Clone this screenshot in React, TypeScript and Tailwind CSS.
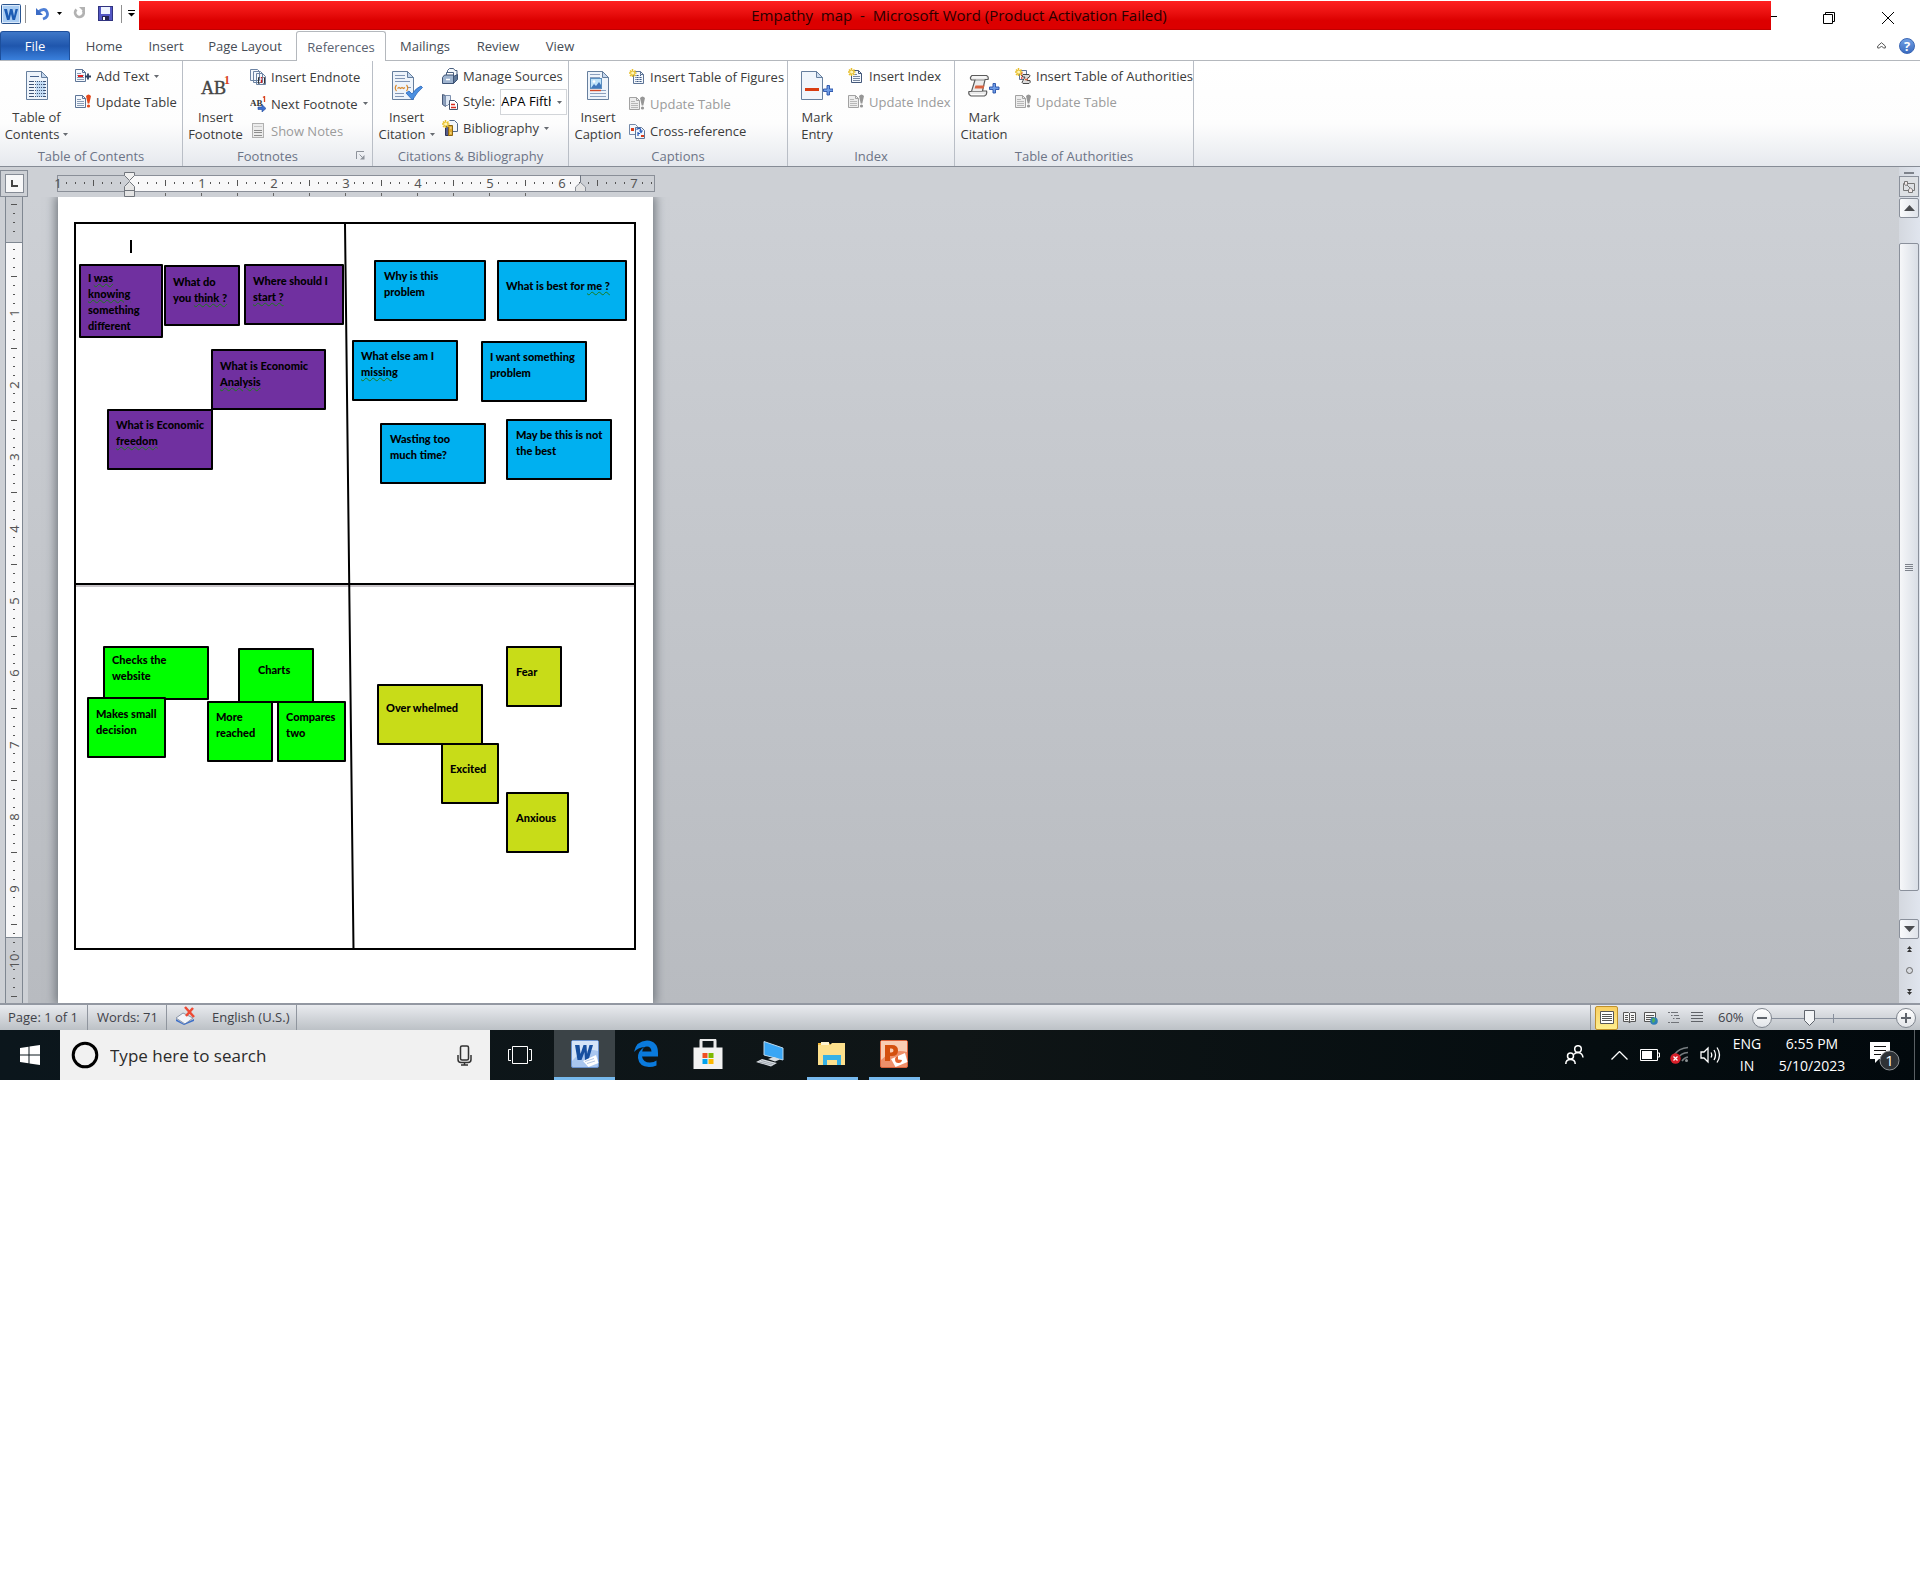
import React from "react";

type Kids = { children?: React.ReactNode };

/* ---------- shared drawing helpers ---------- */

const Caret = () => (
  <svg width="5" height="3" viewBox="0 0 5 3" className="shrink-0" aria-hidden="true">
    <path d="M0 0h5L2.500 3z" fill="#666a70" />
  </svg>
);

const Icon = ({ children, s = 16 }: Kids & { s?: number }) => (
  <svg width={s} height={s} viewBox={`0 0 ${s} ${s}`} className="shrink-0" aria-hidden="true">
    {children}
  </svg>
);

const SmallPage = ({ x = 0, y = 1, stroke = "#5d7496", fill = "#f4f8fd" }) => (
  <g transform={`translate(${x} ${y})`}>
    <path d="M.5 .5h7l3 3v9h-10z" fill={fill} stroke={stroke} />
    <path d="M7.500.5v3h3" fill="none" stroke={stroke} />
    <path d="M2 4.500h4M2 6.500h7M2 8.500h7M2 10.500h7" stroke={stroke} opacity=".7" />
  </g>
);

const Spark = () => (
  <g>
    <path d="M3.500 0v8M0 4h7.500M1 1.500l5.500 5.500M6.500 1.500L1 7" stroke="#e8c02c" strokeWidth="1.500" />
    <circle cx="3.700" cy="4" r="1.600" fill="#fff6b8" />
  </g>
);

const BigPage = ({ x = 0 }) => (
  <g transform={`translate(${x} 0)`}>
    <path d="M1.500 2.500h15l6 6v22h-21z" fill="#eef4fb" stroke="#667f9e" />
    <path d="M16.500 2.500v6h6z" fill="#c4d7ee" stroke="#667f9e" />
  </g>
);

/* ---------- ribbon icons ---------- */

const TocIcon = () => (
  <Icon s={32}>
    <g transform="translate(4 0)">
      <BigPage />
      <rect x="11" y="12" width="9" height="16" fill="#c3dcf5" />
      <path d="M5 7.500h9" stroke="#47628c" />
      <path d="M4 12.500h5M4 15.500h5M4 18.500h5M4 21.500h5M4 24.500h5M4 27.500h5" stroke="#3f5577" />
      <path d="M10 12.500h7M10 15.500h7M10 18.500h7M10 21.500h7M10 24.500h7M10 27.500h7" stroke="#3f5577" strokeDasharray="1 1" />
      <path d="M18 12.500h3M18 15.500h3M18 18.500h3M18 21.500h3M18 24.500h3M18 27.500h3" stroke="#3f5577" />
    </g>
  </Icon>
);

const FootnoteIcon = () => (
  <Icon s={32}>
    <text x="1" y="25" fontFamily="'Liberation Serif', serif" fontSize="18" fill="#444" stroke="#444" strokeWidth=".4">AB</text>
    <text x="24" y="15" fontFamily="'Liberation Serif', serif" fontSize="12" fontWeight="700" fill="#d9431e">1</text>
  </Icon>
);

const CitationIcon = () => (
  <Icon s={32}>
    <BigPage />
    <path d="M4 6.500h10M4 9.500h10M4 12.500h15M4 24.500h9M4 27.500h9M16 18.500h4" stroke="#8296b5" />
    <path d="M5.500 16q-2.500 3 0 6M15.500 16q2.500 3 0 6M6.500 19.500l1.500-1 1.500 1 1.500-1 1.500 1 1.500-1" fill="none" stroke="#d98a2e" strokeWidth="1.200" />
    <path d="M15 24l3-2 3 3q4-6 9-8l1.500 1.500Q26 23 21.500 31z" fill="#4a8fe0" stroke="#2a66ba" strokeWidth=".8" />
  </Icon>
);

const CaptionIcon = () => (
  <Icon s={32}>
    <g transform="translate(4 0)">
      <BigPage />
      <path d="M4 5.500h10M4 8.500h10M4 24.500h16M4 27.500h16M15 21.500h5" stroke="#8ba0bf" />
      <rect x="4.500" y="9.500" width="11" height="10" fill="#bfe3fa" stroke="#5c8fc0" />
      <path d="M5 19l3-4 2 2 3-4 2 3v3z" fill="#3f78bd" />
      <circle cx="8" cy="12.500" r="1.300" fill="#fff" />
      <path d="M4 21.500h11" stroke="#d2492a" strokeWidth="1.400" />
    </g>
  </Icon>
);

const PlusMark = ({ x = 0 }) => (
  <path transform={`translate(${x} 0)`} d="M3 16.500h2.500v3.500H9v2.500H5.500V26H3v-3.500H-.5V20H3z" fill="#6f9de6" stroke="#2750a8" strokeWidth=".9" />
);

const MarkEntryIcon = () => (
  <Icon s={32}>
    <path d="M.5 2.500h15l6 6v22h-21z" fill="#f1f6fc" stroke="#667f9e" />
    <path d="M15.500 2.500v6h6z" fill="#d0dff1" stroke="#667f9e" />
    <rect x="4" y="19" width="14" height="3" fill="#d93d12" />
    <PlusMark x={23} />
  </Icon>
);

const MarkCitationIcon = () => (
  <Icon s={32}>
    <path d="M4 6.500h14.500q2.500 1 1.500 4h-3L14.500 22h4q1 4-2 5H3q-3-1-2-4.500h2.500L7 11H3.500Q1 9 4 6.500z" fill="#ececec" stroke="#5b5b5b" strokeWidth="1.200" />
    <path d="M7 11h9.500M3.500 22.500h11" stroke="#8a8a8a" />
    <path d="M4 8h14M3 25.500h13" stroke="#fff" />
    <path d="M7.500 16.500h9l-1 3H6.500z" fill="#d96442" />
    <g transform="translate(0 -2)"><PlusMark x={22} /></g>
  </Icon>
);

const AddTextIcon = () => (
  <Icon>
    <SmallPage />
    <path d="M3 8h5" stroke="#e02020" strokeWidth="2" />
    <path d="M10 8.500h6M13 5.500v6" stroke="#2c3f5e" strokeWidth="1.800" />
  </Icon>
);

const UpdateIcon = ({ off = false }) => (
  <Icon>
    {off ? <SmallPage stroke="#a2a2a2" fill="#ededed" /> : <SmallPage />}
    <path d="M11 2q2.500-3 5 0l-1.700 7.500h-1.600z" fill={off ? "#969696" : "#e2481c"} />
    <circle cx="13.500" cy="12" r="1.600" fill={off ? "#969696" : "#e2481c"} />
  </Icon>
);

const EndnoteIcon = () => (
  <Icon>
    <path d="M.5.5h7l2 2v9h-9zM3.500 2.500h7l2 2v9h-9zM6.500 4.500h6l3 3v8h-9z" fill="#f3f7fc" stroke="#6d84a4" />
    <path d="M9.500 8.500h-1v6h1M13.500 8.500h1v6h-1" fill="none" stroke="#333" />
    <path d="M11.500 8v1.500M11.500 10.500V14" stroke="#d12020" strokeWidth="1.400" />
  </Icon>
);

const NextFootnoteIcon = () => (
  <Icon>
    <text x="0" y="10" fontFamily="'Liberation Serif', serif" fontSize="9" fontWeight="700" fill="#333">AB</text>
    <path d="M13 1.500l1.500-1V6" fill="none" stroke="#d9431e" strokeWidth="1.300" />
    <path d="M8 11h4V8.500l4 4-4 3.500v-2.500H8z" fill="#3c6fd0" stroke="#234a98" strokeWidth=".6" />
  </Icon>
);

const ShowNotesIcon = () => (
  <Icon>
    <rect x="2.500" y=".5" width="11" height="14" fill="#ececec" stroke="#b0b0b0" />
    <path d="M4 3.500h8" stroke="#c8c8c8" />
    <path d="M4 7.500h8M4 9.500h8M4 12.500h8" stroke="#8d8d8d" />
  </Icon>
);

const SourcesIcon = () => (
  <Icon>
    <path d="M5.500 8V2.500l2-2h4l1.500 2h2V11" fill="#f4f8fc" stroke="#4a6080" />
    <path d="M4.500 8.500V4.500h7v4" fill="#fff" stroke="#4a6080" />
    <path d="M.5 9.500L2.500 7h9v8.500h-11z" fill="#9fb4cf" stroke="#3d5375" />
    <path d="M11.500 15.500l4-4V6.500l-4 2z" fill="#5e7898" stroke="#3d5375" />
    <path d="M4 11.500h4" stroke="#fff" strokeWidth="1.500" />
  </Icon>
);

const StyleIcon = () => (
  <Icon>
    <path d="M.5.5l3 1v11l-3-2z" fill="#8ca0bd" stroke="#4a5a78" />
    <path d="M3.500 1.500h5v7l-3 3h-2z" fill="#dfe8f4" stroke="#7d90ae" />
    <path d="M7.500 6.500h5l3 3v6h-8z" fill="#fff" stroke="#44536c" />
    <path d="M9 10.500h4M9 13.500h5" stroke="#d92b1c" strokeWidth="1.400" />
  </Icon>
);

const BiblioIcon = () => (
  <Icon>
    <path d="M7.500.5h5l3 3v8h-5" fill="#f2f6fb" stroke="#53698a" />
    <path d="M3.500 6.500h3v9h-3z" fill="#555c8a" stroke="#2d335a" />
    <path d="M6.500 5.500h4v10h-4z" fill="#e0aa32" stroke="#8a6514" />
    <path d="M8 8h1.500M8 13h1.500" stroke="#fff2b8" />
    <Spark />
  </Icon>
);

const InsertFiguresIcon = () => (
  <Icon>
    <SmallPage x={4} y={2} />
    <path d="M8.500 6v8M11.500 6v8" stroke="#3f5a86" strokeDasharray="1 1" />
    <Spark />
  </Icon>
);

const CrossRefIcon = () => (
  <Icon>
    <path d="M.5 1.500h6l2 2v8h-8z" fill="#f4f8fc" stroke="#7288a8" />
    <rect x="2" y="5" width="3" height="3" fill="#da3c18" />
    <path d="M6.500 4.500h6l3 3v8h-9z" fill="#f0f6fd" stroke="#5d7496" />
    <path d="M7.500 6.500q4-3 4.500 1.500M10.500 7.500l1.500 2 1.500-2M9 9v4M9 10.500h2" fill="none" stroke="#2457b8" strokeWidth="1.200" />
    <rect x="12" y="12" width="3" height="2" fill="#da3c18" />
  </Icon>
);

const InsertIndexIcon = () => (
  <Icon>
    <SmallPage x={3} y={2} stroke="#44587a" />
    <Spark />
  </Icon>
);

const AuthoritiesIcon = () => (
  <Icon>
    <path d="M4.500 2.500h7v9h-7z" fill="#f5f8fc" stroke="#5d7496" />
    <path d="M6 5h1.500M6 7.500h1.500M6 10h1.500" stroke="#d92b1c" strokeWidth="1.500" />
    <path d="M8 6.500h6q2 1 0 3h-1l-1 3h3q1 2-1 3H8q-2-1 0-3l2-3.500H8q-2-1 0-2.500z" fill="#ddd" stroke="#474747" />
    <path d="M10 11.500h3" stroke="#d96442" strokeWidth="1.500" />
    <Spark />
  </Icon>
);

/* ---------- ribbon parts ---------- */

const Group = ({ label, className, launcher, children }: Kids & { label: string; className: string; launcher?: boolean }) => (
  <section aria-label={label} className={`flex flex-col border-r border-[#b9bec6] ${className}`}>
    <div className="flex h-[85px] items-start">{children}</div>
    <div className="flex h-[19px] items-center">
      <h2 className={`flex-1 text-center text-[13px] leading-4 text-[#6c7486] ${launcher ? "pr-1" : ""}`}>{label}</h2>
      {launcher && (
        <button aria-label={`${label} options`} className="mr-1 w-3">
          <svg width="9" height="9" viewBox="0 0 9 9" aria-hidden="true">
            <path d="M.5 8V.5H8" fill="none" stroke="#8d929a" />
            <path d="M3.500 3.500l3 3" stroke="#8d929a" />
            <path d="M8.500 4v4.500H4z" fill="#8d929a" />
          </svg>
        </button>
      )}
    </div>
  </section>
);

const Big = ({ icon, a, b, drop, className }: { icon: React.ReactNode; a: string; b: string; drop?: boolean; className: string }) => (
  <button className={`flex shrink-0 flex-col items-center pt-2 pr-0.5 text-[13px] leading-[17px] ${className}`}>
    {icon}
    <span className="mt-2">{a}</span>
    <span className="flex items-center gap-1 whitespace-nowrap">
      {b}
      {drop && <Caret />}
    </span>
  </button>
);

const Small = ({ icon, text, drop, off, className = "h-[26px]" }: { icon: React.ReactNode; text: string; drop?: boolean; off?: boolean; className?: string }) => (
  <button className={`flex items-center gap-[5px] whitespace-nowrap text-[13px] leading-4 ${className} ${off ? "text-[#9b9b9b]" : ""}`}>
    {icon}
    <span>{text}</span>
    {drop && <Caret />}
  </button>
);

/* ---------- document data ---------- */

type Note = {
  x: number; y: number; w: number; h: number;
  color: "purple" | "blue" | "green" | "olive";
  pad: string;
  lines: [string, string?][];
};

const noteColors = {
  purple: "bg-[#7030a0]",
  blue: "bg-[#00b0f0]",
  green: "bg-[#00ff00]",
  olive: "bg-[#c8dc18]",
};

/* The second string of a line carries the grammar underline. */
const notes: Note[] = [
  { x: 21, y: 67, w: 84, h: 74, color: "purple", pad: "pt-1 pl-[7px]", lines: [["I ", "was"], ["", "knowing"], ["something"], ["different"]] },
  { x: 106, y: 68, w: 76, h: 61, color: "purple", pad: "pt-[7px] pl-[7px]", lines: [["What do"], ["you ", "think ?"]] },
  { x: 186, y: 67, w: 100, h: 61, color: "purple", pad: "pt-[7px] pl-[7px]", lines: [["Where should I"], ["", "start ?"]] },
  { x: 153, y: 152, w: 115, h: 61, color: "purple", pad: "pt-[7px] pl-[7px]", lines: [["What is Economic"], ["", "Analysis"]] },
  { x: 49, y: 212, w: 106, h: 61, color: "purple", pad: "pt-1.5 pl-[7px]", lines: [["What is Economic"], ["", "freedom"]] },
  { x: 316, y: 63, w: 112, h: 61, color: "blue", pad: "pt-1.5 pl-2", lines: [["Why is this"], ["problem"]] },
  { x: 439, y: 63, w: 130, h: 61, color: "blue", pad: "pt-4 pl-[7px]", lines: [["What is best for ", "me ?"]] },
  { x: 294, y: 143, w: 106, h: 61, color: "blue", pad: "pt-1.5 pl-[7px]", lines: [["What else am I"], ["", "missing"]] },
  { x: 423, y: 144, w: 106, h: 61, color: "blue", pad: "pt-1.5 pl-[7px]", lines: [["I want something"], ["problem"]] },
  { x: 322, y: 226, w: 106, h: 61, color: "blue", pad: "pt-1.5 pl-2", lines: [["Wasting too"], ["much time?"]] },
  { x: 448, y: 222, w: 106, h: 61, color: "blue", pad: "pt-1.5 pl-2", lines: [["May be this is not"], ["the best"]] },
  { x: 45, y: 449, w: 106, h: 54, color: "green", pad: "pt-1 pl-[7px]", lines: [["Checks the"], ["website"]] },
  { x: 180, y: 451, w: 76, h: 55, color: "green", pad: "pt-3 pl-[18px]", lines: [["Charts"]] },
  { x: 29, y: 500, w: 79, h: 61, color: "green", pad: "pt-[7px] pl-[7px]", lines: [["Makes small"], ["decision"]] },
  { x: 149, y: 504, w: 66, h: 61, color: "green", pad: "pt-1.5 pl-[7px]", lines: [["More"], ["reached"]] },
  { x: 219, y: 504, w: 69, h: 61, color: "green", pad: "pt-1.5 pl-[7px]", lines: [["Compares"], ["two"]] },
  { x: 448, y: 449, w: 56, h: 61, color: "olive", pad: "pt-4 pl-2", lines: [["Fear"]] },
  { x: 319, y: 487, w: 106, h: 61, color: "olive", pad: "pt-[14px] pl-[7px]", lines: [["Over whelmed"]] },
  { x: 383, y: 546, w: 58, h: 61, color: "olive", pad: "pt-4 pl-[7px]", lines: [["Excited"]] },
  { x: 448, y: 595, w: 63, h: 61, color: "olive", pad: "pt-4 pl-2", lines: [["Anxious"]] },
];

const StickyNote = ({ n }: { n: Note }) => (
  <div
    className={`absolute rounded-[1px] border-2 border-black font-[Lato,sans-serif] text-[11px] font-black leading-4 whitespace-pre text-black ${noteColors[n.color]} ${n.pad}`}
    style={{ left: n.x, top: n.y, width: n.w, height: n.h }}
  >
    {n.lines.map(([plain, marked], i) => (
      <p key={i}>
        {plain}
        {marked && <span className="underline decoration-[#1c7a1c] decoration-wavy decoration-1 underline-offset-1">{marked}</span>}
      </p>
    ))}
  </div>
);

/* ---------- rulers ---------- */

const HorizontalRuler = () => {
  const marks = Array.from({ length: 67 }, (_, k) => k);
  return (
    <svg width="610" height="30" viewBox="0 0 610 30" className="block" role="img" aria-label="Horizontal ruler">
      <rect x="8.500" y="8.500" width="597" height="16" fill="#cdd0d5" stroke="#8a8f98" />
      <rect x="80" y="9" width="451" height="15" fill="#f8f8f9" />
      <path d="M531.500 8v16" stroke="#6f7681" />
      {marks.map((k) => {
        const x = 8 + k * 9;
        if (k === 8) return null;
        if (k % 8 === 0)
          return (
            <text key={k} x={x + 1} y="21" textAnchor="middle" fontSize="13" fontFamily="'Noto Sans', sans-serif" fill="#555">
              {k === 0 ? 1 : k / 8 - 1}
            </text>
          );
        return k % 8 === 4 ? <rect key={k} x={x} y="13" width="1" height="6" fill="#555" /> : <rect key={k} x={x} y="15" width="1" height="2" fill="#555" />;
      })}
      {Array.from({ length: 11 }, (_, i) => (
        <rect key={i} x={116 + i * 36} y="26" width="1" height="3" fill="#666" />
      ))}
      <path d="M75.500 5.500h10v3l-5 5-5-5z" fill="#f0f0f0" stroke="#70757c" />
      <path d="M80.500 14.500l5 5v10h-10v-10z" fill="#e4e4e4" stroke="#70757c" />
      <path d="M75.500 23.500h10" stroke="#70757c" />
      <path d="M531.500 15.500l5 4.500v4.500h-10V20z" fill="#e4e4e4" stroke="#8a8f98" />
    </svg>
  );
};

const VerticalRuler = () => {
  const marks = Array.from({ length: 89 }, (_, k) => k);
  return (
    <svg width="28" height="806" viewBox="0 0 28 806" className="block" role="img" aria-label="Vertical ruler">
      <rect x="5" y="0" width="18" height="806" fill="#c9ccd1" />
      <rect x="5" y="45" width="18" height="695" fill="#f8f8f9" />
      <path d="M5.500 0v806M22.500 0v806M5 45.500h18M5 740.500h18" stroke="#7f8791" />
      {marks.map((k) => {
        const y = 8 + k * 9;
        const fromZero = k - 4;
        if (fromZero === 0) return null;
        if (fromZero > 0 && fromZero % 8 === 0)
          return (
            <text key={k} transform={`translate(19 ${y}) rotate(-90)`} textAnchor="middle" fontSize="13" fontFamily="'Noto Sans', sans-serif" fill="#555">
              {fromZero / 8}
            </text>
          );
        return (fromZero + 8) % 8 === 4 ? <rect key={k} x="11" y={y - 1} width="6" height="1" fill="#555" /> : <rect key={k} x="13" y={y - 1} width="2" height="1" fill="#555" />;
      })}
    </svg>
  );
};

/* ---------- window sections ---------- */

const TitleBar = () => (
  <header className="flex h-[31px] items-start">
    <div className="flex h-[27px] w-[139px] shrink-0 items-center pl-px">
      <svg width="20" height="20" viewBox="0 0 20 20" aria-hidden="true">
        <rect x=".5" y=".5" width="19" height="19" rx="1" fill="#dbeafb" stroke="#2a5590" />
        <rect x="2" y="2" width="16" height="16" fill="#a9ccf2" />
        <path d="M3 5h3l1.500 7L9 5h2.500l1.500 7 1.500-7H17l-3 11h-2.500L10 10l-1.500 6H6z" fill="#1c5cb4" />
      </svg>
      <span className="ml-1 h-[18px] w-px bg-[#8f8f8f]" />
      <button aria-label="Undo" className="ml-[9px]">
        <svg width="14" height="14" viewBox="0 0 14 14" className="block" aria-hidden="true">
          <path d="M3 5q7-5 9 0t-4 7" fill="none" stroke="#4d7fd6" strokeWidth="2.800" />
          <path d="M1 1v7h7z" fill="#3b6cc6" />
        </svg>
      </button>
      <button aria-label="Undo history" className="ml-2">
        <svg width="5" height="3" viewBox="0 0 5 3" className="block" aria-hidden="true"><path d="M0 0h5L2.500 3z" /></svg>
      </button>
      <button aria-label="Redo" className="ml-[11px]">
        <svg width="13" height="13" viewBox="0 0 13 13" className="block" aria-hidden="true">
          <path d="M3.500 2.500a4.300 4.300 0 1 0 6.500.8" fill="none" stroke="#b2b2b2" strokeWidth="2.800" />
          <path d="M6 0h6v6z" fill="#b2b2b2" />
        </svg>
      </button>
      <button aria-label="Save" className="ml-3">
        <svg width="15" height="15" viewBox="0 0 15 15" className="block" aria-hidden="true">
          <rect x=".5" y=".5" width="14" height="14" fill="#5357c4" stroke="#30337f" />
          <rect x="3" y="1" width="9" height="7" fill="#eef3ff" />
          <rect x="4" y="10" width="7" height="4" fill="#23244f" />
          <rect x="5" y="11" width="2" height="3" fill="#fff" />
        </svg>
      </button>
      <span className="ml-2 h-[18px] w-px bg-[#8f8f8f]" />
      <button aria-label="Customize toolbar" className="ml-[6px]">
        <svg width="7" height="7" viewBox="0 0 7 7" className="block" aria-hidden="true"><path d="M0 .5h7" stroke="#000" /><path d="M0 3h7L3.500 6.500z" /></svg>
      </button>
    </div>
    <h1 className="mt-px flex h-[29px] min-w-0 flex-1 items-center justify-center border-b border-[#c00000] bg-gradient-to-b from-[#ff2020] to-[#dc0000] to-70% pl-2 text-[15px] whitespace-pre text-[#2b0000]">
      Empathy  map  -  Microsoft Word (Product Activation Failed)
    </h1>
    <div className="flex h-[31px] w-[149px] shrink-0 items-center pt-1">
      <button aria-label="Minimize" className="w-[52px]"><svg width="6" height="11" viewBox="0 0 6 11" className="block" aria-hidden="true"><path d="M0 4.500h6" stroke="#000" /></svg></button>
      <button aria-label="Restore">
        <svg width="12" height="12" viewBox="0 0 12 12" className="block" aria-hidden="true"><path d="M.5 2.500h9v9h-9zM2.500 2.500v-2h9v9h-2" fill="none" stroke="#000" /></svg>
      </button>
      <button aria-label="Close" className="ml-[47px]">
        <svg width="12" height="12" viewBox="0 0 12 12" className="block" aria-hidden="true"><path d="M0 0l12 12M12 0L0 12" stroke="#000" /></svg>
      </button>
    </div>
  </header>
);

const Tabs = () => {
  const tab = "h-[30px] pt-0.5 text-center text-[13px] text-[#454b55]";
  return (
    <nav className="flex h-[30px] items-stretch border-b border-[#b4b8bd] text-[13px] text-[#454b55]">
      <button className="w-[70px] rounded-t-[3px] border border-b-0 border-[#1d4f9c] bg-gradient-to-b from-[#3f78c8] via-[#1f56ad] to-[#3a80dc] pt-0.5 text-white">File</button>
      <button className={`w-[68px] ${tab}`}>Home</button>
      <button className={`w-[56px] ${tab}`}>Insert</button>
      <button className={`w-[102px] ${tab}`}>Page Layout</button>
      <button className="-mb-px w-[90px] rounded-t-[3px] border border-b-0 border-[#b4b8bd] bg-white pt-0.5 text-[#5a6270]">References</button>
      <button className={`w-[78px] ${tab}`}>Mailings</button>
      <button className={`w-[68px] ${tab}`}>Review</button>
      <button className={`w-[56px] ${tab}`}>View</button>
      <div className="flex flex-1 items-center justify-end gap-[13px] pr-[5px]">
        <button aria-label="Minimize ribbon">
          <svg width="9" height="7" viewBox="0 0 9 7" className="block" aria-hidden="true"><path d="M.7 4L4.500.7 8.300 4v2H6.500L4.500 4 2.500 6H.7z" fill="none" stroke="#555" /></svg>
        </button>
        <button aria-label="Help" className="size-4 rounded-full border border-[#3a66b4] bg-gradient-to-b from-[#6f9fe4] to-[#3c6cc0] text-center text-[13px] leading-[14px] font-bold text-white">?</button>
      </div>
    </nav>
  );
};

const Ribbon = () => (
  <div className="flex h-[106px] border-b border-[#868c96] bg-gradient-to-b from-white via-[#fdfdfd] via-60% to-[#e6e9ee] text-[#3b3b3b]">
    <Group label="Table of Contents" className="w-[183px]">
      <Big className="w-[75px]" icon={<TocIcon />} a="Table of" b="Contents" drop />
      <div className="flex flex-col pt-0.5">
        <Small icon={<AddTextIcon />} text="Add Text" drop />
        <Small icon={<UpdateIcon />} text="Update Table" />
      </div>
    </Group>
    <Group label="Footnotes" className="w-[190px]" launcher>
      <Big className="w-[67px]" icon={<FootnoteIcon />} a="Insert" b="Footnote" />
      <div className="flex flex-col pt-0.5">
        <Small className="h-[27px]" icon={<EndnoteIcon />} text="Insert Endnote" />
        <Small className="h-[27px]" icon={<NextFootnoteIcon />} text="Next Footnote" drop />
        <Small className="h-[27px]" icon={<ShowNotesIcon />} text="Show Notes" off />
      </div>
    </Group>
    <Group label="Citations & Bibliography" className="w-[196px]">
      <Big className="w-[69px]" icon={<CitationIcon />} a="Insert" b="Citation" drop />
      <div className="flex flex-col pt-0.5">
        <Small icon={<SourcesIcon />} text="Manage Sources" />
        <div className="flex h-[26px] items-center gap-[5px] text-[13px]">
          <StyleIcon />
          <label htmlFor="style">Style:</label>
          <span className="flex h-[26px] w-[67px] items-center border border-[#d2d5d9] bg-white pr-1">
            <select id="style" defaultValue="apa" className="h-6 min-w-0 flex-1 appearance-none overflow-hidden bg-transparent text-[13px] text-black outline-none">
              <option value="apa">APA Fifth Edition</option>
              <option value="mla">MLA Sixth Edition</option>
            </select>
            <span className="w-1.5 shrink-0" />
            <Caret />
          </span>
        </div>
        <Small icon={<BiblioIcon />} text="Bibliography" drop />
      </div>
    </Group>
    <Group label="Captions" className="w-[219px]">
      <Big className="w-[60px]" icon={<CaptionIcon />} a="Insert" b="Caption" />
      <div className="flex flex-col pt-0.5">
        <Small className="h-[27px]" icon={<InsertFiguresIcon />} text="Insert Table of Figures" />
        <Small className="h-[27px]" icon={<UpdateIcon off />} text="Update Table" off />
        <Small className="h-[27px]" icon={<CrossRefIcon />} text="Cross-reference" />
      </div>
    </Group>
    <Group label="Index" className="w-[167px]">
      <Big className="w-[60px]" icon={<MarkEntryIcon />} a="Mark" b="Entry" />
      <div className="flex flex-col pt-0.5">
        <Small icon={<InsertIndexIcon />} text="Insert Index" />
        <Small icon={<UpdateIcon off />} text="Update Index" off />
      </div>
    </Group>
    <Group label="Table of Authorities" className="w-[239px]">
      <Big className="w-[60px]" icon={<MarkCitationIcon />} a="Mark" b="Citation" />
      <div className="flex flex-col pt-0.5">
        <Small icon={<AuthoritiesIcon />} text="Insert Table of Authorities" />
        <Small icon={<UpdateIcon off />} text="Update Table" off />
      </div>
    </Group>
  </div>
);

const DocumentPage = () => (
  <article className="relative ml-[30px] h-[806px] w-[595px] bg-white shadow-[0_0_10px_2px_#6d737a]">
    <svg width="595" height="806" viewBox="0 0 595 806" className="block" aria-hidden="true">
      <path d="M18 389h558" stroke="#c9c4c8" strokeWidth="2" />
      <rect x="17" y="26" width="560" height="726" fill="none" stroke="#000" strokeWidth="2" />
      <path d="M17 387h560M287 27l8.500 725" stroke="#000" strokeWidth="2" />
      <path d="M73 43v13" stroke="#000" strokeWidth="2" />
    </svg>
    {notes.map((n, i) => (
      <StickyNote key={i} n={n} />
    ))}
  </article>
);

const ScrollBar = () => {
  const btn = "flex h-5 w-full items-center justify-center rounded-[2px] border border-[#8a909b] bg-gradient-to-r from-[#fafbfc] to-[#dfe3ea]";
  return (
    <aside className="flex w-[21px] shrink-0 flex-col items-center bg-gradient-to-r from-[#d4d8df] to-[#e0e5ee] pt-[5px] pr-px">
      <span className="h-0.5 w-2.5 bg-[#7d828b]" />
      <button aria-label="Toggle ruler" className="mt-0.5 flex h-[21px] w-full items-center justify-center border border-[#8a909b] bg-[#dde0e4]">
        <svg width="12" height="12" viewBox="0 0 12 12" aria-hidden="true">
          <path d="M5 2.500h6.500v7H9M7 9.500H.5v-7H1" fill="none" stroke="#777" />
          <path d="M1.500.5h3v3l-1.500 1-1.500-1zM5.500 11.500h4v-3l-2-1.500-2 1.500zM4 4l3 3" fill="#f3e9ea" stroke="#777" />
        </svg>
      </button>
      <button aria-label="Scroll up" className={`mt-px ${btn}`}>
        <svg width="11" height="6" viewBox="0 0 11 6" aria-hidden="true"><path d="M0 6L5.500 0 11 6z" fill="#4b4d50" /></svg>
      </button>
      <div className="mt-[25px] flex h-[648px] w-full flex-col items-center justify-center gap-px rounded-[2px] border border-[#8a909b] bg-gradient-to-r from-[#f6f7f9] to-[#d9dee6]">
        <span className="h-px w-2 bg-[#7d828b]" />
        <span className="h-px w-2 bg-[#7d828b]" />
        <span className="h-px w-2 bg-[#7d828b]" />
        <span className="h-px w-2 bg-[#7d828b]" />
      </div>
      <button aria-label="Scroll down" className={`mt-7 ${btn}`}>
        <svg width="11" height="6" viewBox="0 0 11 6" aria-hidden="true"><path d="M0 0h11L5.500 6z" fill="#4b4d50" /></svg>
      </button>
      <button aria-label="Previous page" className="mt-[7px]">
        <svg width="5" height="6" viewBox="0 0 5 6" className="block" aria-hidden="true"><path d="M0 3L2.500 0 5 3zM0 6L2.500 3 5 6z" fill="#333" /></svg>
      </button>
      <button aria-label="Browse object" className="mt-[15px] size-[7px] rounded-full border border-[#666] bg-[#d8dbe0]" />
      <button aria-label="Next page" className="mt-[15px]">
        <svg width="5" height="6" viewBox="0 0 5 6" className="block" aria-hidden="true"><path d="M0 0h5L2.500 3zM0 3h5L2.500 6z" fill="#333" /></svg>
      </button>
    </aside>
  );
};

const Workspace = () => (
  <div className="flex bg-[#cdd0d5]">
    <div className="w-7 shrink-0">
      <div className="flex h-[30px] items-end">
        <button aria-label="Tab stop" className="flex h-[27px] w-7 items-center justify-center border border-[#858b95] bg-[#cdd0d5]">
          <span className="flex size-[19px] items-center justify-center border border-[#858b95] bg-[#f8f8f9]">
            <svg width="7" height="7" viewBox="0 0 7 7" aria-hidden="true"><path d="M1 0v6h6" fill="none" stroke="#444" strokeWidth="2" /></svg>
          </span>
        </button>
      </div>
      <VerticalRuler />
    </div>
    <main className="min-w-0 flex-1">
      <div className="h-[30px] bg-[#cdd0d5] pl-[21px]"><HorizontalRuler /></div>
      <div className="overflow-hidden bg-gradient-to-b from-[#cdd0d5] to-[#b8bbc0]"><DocumentPage /></div>
    </main>
    <ScrollBar />
  </div>
);

const StatusBar = () => {
  const cell = "flex h-[25px] items-center border-r border-[#8f959e]";
  return (
    <footer className="flex h-[27px] items-end border-t-2 border-[#9398a2] bg-gradient-to-b from-[#e9ebef] to-[#bcc1c6] text-[13px] text-[#3f4249]">
      <span className={`w-[88px] pl-2 ${cell}`}>Page: 1 of 1</span>
      <span className={`w-[79px] pl-[9px] ${cell}`}>Words: 71</span>
      <span className={`w-[130px] pl-2 ${cell}`}>
        <svg width="21" height="20" viewBox="0 0 21 20" className="mb-1" aria-hidden="true">
          <path d="M1 12l7-5 4 2 6 3-8 6z" fill="#f2f5fa" stroke="#8d97a8" />
          <path d="M1 13l8 5 10-5v2l-10 4-8-4z" fill="#3d6fc8" />
          <path d="M10 1l9 10M18 2l-7 8" stroke="#ee4a34" strokeWidth="2.500" />
        </svg>
        <span className="ml-4">English (U.S.)</span>
      </span>
      <div className="flex h-[25px] flex-1 items-center justify-end pr-1">
        <span className="mr-1 h-[25px] w-px bg-[#8f959e]" />
        <button aria-label="Print layout" className="flex h-6 w-[23px] items-center justify-center rounded-[2px] border border-[#c0902a] bg-gradient-to-b from-[#f9cf62] to-[#fdee8e]">
          <svg width="14" height="13" viewBox="0 0 14 13" aria-hidden="true"><path d="M.5.5h13v12H.5z" fill="#fff" stroke="#555" /><path d="M2 3.500h10M2 5.500h10M2 7.500h10M2 9.500h10" stroke="#555" /></svg>
        </button>
        <button aria-label="Full screen reading" className="ml-[5px]">
          <svg width="13" height="13" viewBox="0 0 13 13" className="block" aria-hidden="true"><path d="M.5 1.500h5l1 1 1-1h5v9h-5l-1 1.500-1-1.500h-5z" fill="#f5f5f5" stroke="#555" /><path d="M6.500 2v10M2 4.500h3M2 6.500h3M2 8.500h3M8 4.500h3M8 6.500h3M8 8.500h3" stroke="#555" /></svg>
        </button>
        <button aria-label="Web layout" className="ml-2">
          <svg width="14" height="14" viewBox="0 0 14 14" className="block" aria-hidden="true"><path d="M.5 1.500h11v9H.5z" fill="#f5f5f5" stroke="#555" /><path d="M2 4.500h8M2 6.500h8M2 8.500h5" stroke="#555" /><circle cx="10" cy="10" r="3.800" fill="#2f7fb8" /><path d="M8 8q2-2 3 0t-2 4q-1-1-1-4" fill="#4fae5c" /></svg>
        </button>
        <button aria-label="Outline" className="ml-[10px]">
          <svg width="12" height="13" viewBox="0 0 12 13" className="block" aria-hidden="true"><path d="M0 1.500h2M3 1.500h7M3 4.500h1.500M6 4.500h5M5 7.500h1.500M8 7.500h4M0 11.500h2M3 11.500h8" stroke="#707378" /></svg>
        </button>
        <button aria-label="Draft" className="ml-[11px]">
          <svg width="12" height="13" viewBox="0 0 12 13" className="block" aria-hidden="true"><path d="M0 1.500h12M0 4.500h12M0 7.500h12M0 10.500h12" stroke="#606368" strokeWidth="1.200" /></svg>
        </button>
        <button className="ml-[15px] w-[34px] text-left">60%</button>
        <button aria-label="Zoom out" className="flex size-5 items-center justify-center rounded-full border border-[#7f858e] bg-gradient-to-b from-white to-[#e2e5e9]"><span className="h-0.5 w-2.5 bg-[#5f646c]" /></button>
        <div className="relative h-5 w-[124px]">
          <svg width="124" height="20" viewBox="0 0 124 20" className="block" aria-hidden="true">
            <path d="M0 10.500h124" stroke="#878f9c" />
            <path d="M61.500 6v9" stroke="#878f9c" />
            <path d="M32.500 2.500h10v10l-5 5-5-5z" fill="#f2f4f6" stroke="#5f646c" />
          </svg>
          <input type="range" min="10" max="500" defaultValue="60" aria-label="Zoom" className="absolute inset-0 h-5 w-full opacity-0" />
        </div>
        <button aria-label="Zoom in" className="flex size-5 items-center justify-center rounded-full border border-[#7f858e] bg-gradient-to-b from-white to-[#e2e5e9]">
          <svg width="10" height="10" viewBox="0 0 10 10" aria-hidden="true"><path d="M5 0v10M0 5h10" stroke="#5f646c" strokeWidth="2" /></svg>
        </button>
      </div>
    </footer>
  );
};

const TaskButton = ({ label, state, children }: Kids & { label: string; state?: "active" | "open" }) => (
  <button aria-label={label} className={`flex h-full flex-col items-center ${state === "active" ? "w-[61px] bg-[#3b4347]" : "w-[62px]"}`}>
    <span className="flex flex-1 items-center justify-center">{children}</span>
    <span className={`h-[3px] ${state === "active" ? "w-full bg-[#76b9ed]" : state === "open" ? "w-[51px] bg-[#76b9ed]" : "w-full"}`} />
  </button>
);

const TaskBar = () => (
  <div className="flex h-[50px] items-center bg-gradient-to-r from-[#0b161c] via-[#0f1516] to-[#02090d] text-white">
    <button aria-label="Start" className="flex h-full w-[60px] items-center justify-center">
      <svg width="20" height="20" viewBox="0 0 20 20" aria-hidden="true"><path d="M0 3l8.500-1.300v7.800H0zM9.500 1.500L20 0v9.500H9.500zM0 10.500h8.500v7.800L0 17zM9.500 10.500H20V20L9.500 18.500z" fill="#fff" /></svg>
    </button>
    <div className="flex h-full w-[430px] items-center bg-[#f1f1f1] pl-[11px]">
      <svg width="28" height="28" viewBox="0 0 28 28" aria-hidden="true"><circle cx="14" cy="14" r="11.800" fill="none" stroke="#000" strokeWidth="3" /></svg>
      <input aria-label="Type here to search" placeholder="Type here to search" className="ml-[11px] w-[336px] bg-transparent pt-0.5 text-[17px] text-[#2b2b2b] outline-none placeholder:text-[#2b2b2b]" />
      <button aria-label="Voice search" className="ml-[11px]">
        <svg width="15" height="21" viewBox="0 0 15 21" className="block" aria-hidden="true"><rect x="3.500" y="1" width="8" height="14" rx="1.500" fill="none" stroke="#333" strokeWidth="1.500" /><path d="M1 10v4.500q0 3 3 3h7q3 0 3-3V10M7.500 17.500V20M4 20h7" fill="none" stroke="#333" strokeWidth="1.500" /></svg>
      </button>
    </div>
    <button aria-label="Task view" className="flex h-full w-16 items-center justify-center pr-1">
      <svg width="24" height="18" viewBox="0 0 24 18" aria-hidden="true"><path d="M4.500.5h15v17h-15zM3 3.500H.5v11H3M21 3.500h2.500v11H21" fill="none" stroke="#fff" /></svg>
    </button>
    <TaskButton label="Word" state="active">
      <svg width="28" height="28" viewBox="0 0 28 28" aria-hidden="true">
        <rect x=".5" y=".5" width="27" height="27" rx="1.500" fill="#a9c6ef" stroke="#6b93d0" />
        <path d="M1 1h26v10q-14-4-26 10z" fill="#d5e4f8" />
        <path d="M4 5h4.500l1 9 3-9h3l.5 9 2.500-9H22l-4.500 15h-3.500l-.5-8-3 8H6.500z" fill="#174f9f" />
        <path d="M12 21l13-6 2.500 8-10 4z" fill="#fff" /><path d="M14 21.500l9-3M16 23.500l8-2.500" stroke="#b4c6e4" />
      </svg>
    </TaskButton>
    <TaskButton label="Edge">
      <svg width="26" height="27" viewBox="0 0 26 27" aria-hidden="true">
        <path d="M1 12Q3 1 14 .5 25 1 25 13v3.500H9q1 6 8 6 4 0 6.500-2v5Q20 27 16 27 6 26.500 5 18q-.5-7 6.500-11Q5 7.500 1 12zM9.200 11.500h9.300q-.5-5-4.500-5t-4.800 5z" fill="#0a7add" fillRule="evenodd" />
      </svg>
    </TaskButton>
    <TaskButton label="Store">
      <svg width="30" height="30" viewBox="0 0 30 30" aria-hidden="true">
        <path d="M8 9V2q0-1.500 1.500-1.500h11Q22 .5 22 2v7" fill="none" stroke="#e9e9e9" strokeWidth="3" />
        <rect x=".5" y="8.500" width="29" height="21.500" fill="#f2f2f2" />
        <path d="M9.500 14h5v5h-5z" fill="#f04e23" /><path d="M15.500 14h5v5h-5z" fill="#7db900" /><path d="M9.500 20h5v5h-5z" fill="#00a3ee" /><path d="M15.500 20h5v5h-5z" fill="#fdb800" />
      </svg>
    </TaskButton>
    <TaskButton label="This PC">
      <svg width="28" height="26" viewBox="0 0 28 26" aria-hidden="true">
        <path d="M8 .5l19 6.500v12L8 14z" fill="#3aa6f4" stroke="#bcd7ea" />
        <path d="M12 18l6-2 6 2.500-5 2zM0 21l6-3 15 4-6 3.500z" fill="#d8dde2" />
        <path d="M3 21l13 3M5 19.500l13 3.500" stroke="#8b949c" strokeWidth=".7" />
      </svg>
    </TaskButton>
    <TaskButton label="File Explorer" state="open">
      <svg width="28" height="26" viewBox="0 0 28 26" aria-hidden="true">
        <path d="M0 2h11l3 3H0z" fill="#f0b93a" /><path d="M3 1h8v3H3z" fill="#fff4cf" />
        <path d="M0 4h12l2-2h13v22H0z" fill="#fde08c" />
        <path d="M5 14h18v10h-4v-5H9v5H5z" fill="#36b1e6" />
      </svg>
    </TaskButton>
    <TaskButton label="PowerPoint" state="open">
      <svg width="28" height="28" viewBox="0 0 28 28" aria-hidden="true">
        <rect x=".5" y=".5" width="27" height="27" rx="1.500" fill="#ee8f6a" stroke="#d9613a" />
        <path d="M1 1h26v11q-14-4-26 8z" fill="#f9cdb4" />
        <path d="M5 5h7q6 0 6 5.500T12 16h-2v5H5zM10 8.500v4h1.500q2 0 2-2t-2-2z" fill="#d4500f" fillRule="evenodd" />
        <path d="M11 19l14-6 2.500 9-12 5z" fill="#fff" /><path d="M18 16a3.500 3.500 0 1 0 4 4l-4-.5z" fill="#e2632f" />
      </svg>
    </TaskButton>
    <div className="flex h-full flex-1 items-center justify-end pr-[5px]">
      <button aria-label="People" className="mr-[27px]">
        <svg width="19" height="20" viewBox="0 0 19 20" className="block" aria-hidden="true"><circle cx="13" cy="4" r="3.300" fill="none" stroke="#fff" strokeWidth="1.500" /><circle cx="5.500" cy="11" r="3" fill="none" stroke="#fff" strokeWidth="1.500" /><path d="M.8 19q0-4.500 4.700-4.500t4.700 4.500M9 9.500q1-2 4-2 4.500.5 5 5" fill="none" stroke="#fff" strokeWidth="1.500" /></svg>
      </button>
      <button aria-label="Show hidden icons" className="mr-3">
        <svg width="17" height="9" viewBox="0 0 17 9" className="block" aria-hidden="true"><path d="M.5 8.500l8-8 8 8" fill="none" stroke="#fff" strokeWidth="1.300" /></svg>
      </button>
      <svg width="20" height="12" viewBox="0 0 20 12" className="mr-[10px]" role="img" aria-label="Battery"><path d="M.5.5h17v11H.5zM18 4h1.500v4H18" fill="none" stroke="#fff" /><path d="M2 2h10v8H2z" fill="#fff" /></svg>
      <svg width="19" height="18" viewBox="0 0 19 18" className="mr-[11px]" role="img" aria-label="No network">
        <path d="M4 9Q9 2 18 1.500M8 12q3-5 10-5.500M12 15q2-3.500 6-4" fill="none" stroke="#777d80" strokeWidth="1.600" /><circle cx="16.500" cy="14.500" r="1.500" fill="#8b9093" />
        <circle cx="5.500" cy="12.500" r="5.200" fill="#d9202a" /><path d="M3.500 10.500l4 4M7.500 10.500l-4 4" stroke="#fff" strokeWidth="1.300" />
      </svg>
      <svg width="21" height="18" viewBox="0 0 21 18" className="mr-2" role="img" aria-label="Volume"><path d="M1 6h3l4-4v14l-4-4H1zM11 6.500q1.500 2.500 0 5M14 4q3 5 0 10M17 1.500q5 7.500 0 15" fill="none" stroke="#fff" strokeWidth="1.300" /></svg>
      <button className="w-9 text-center text-[14px] leading-[22px] whitespace-nowrap">ENG<br />IN</button>
      <time className="ml-2 w-[78px] text-center text-[14px] leading-[22px] whitespace-nowrap">6:55 PM<br />5/10/2023</time>
      <button aria-label="Notifications" className="ml-[18px] mr-[14px]">
        <svg width="31" height="32" viewBox="0 0 31 32" className="block" aria-hidden="true">
          <path d="M1 3h20v17H10l-4 4v-4H1z" fill="#fff" /><path d="M5 7.500h12M5 11.500h12M5 15.500h7" stroke="#111" strokeWidth="1.200" />
          <circle cx="20.500" cy="21.500" r="9.500" fill="#2e3236" stroke="#8d9194" />
          <text x="20.500" y="27" fontSize="15" fill="#fff" textAnchor="middle" fontFamily="'Open Sans', sans-serif">1</text>
        </svg>
      </button>
      <span className="h-full w-px bg-[#5a6064]" />
    </div>
  </div>
);

export default function App() {
  return (
    <div className="min-h-screen bg-white font-[Open_Sans,Noto_Sans,sans-serif]">
      <TitleBar />
      <Tabs />
      <Ribbon />
      <Workspace />
      <StatusBar />
      <TaskBar />
    </div>
  );
}
